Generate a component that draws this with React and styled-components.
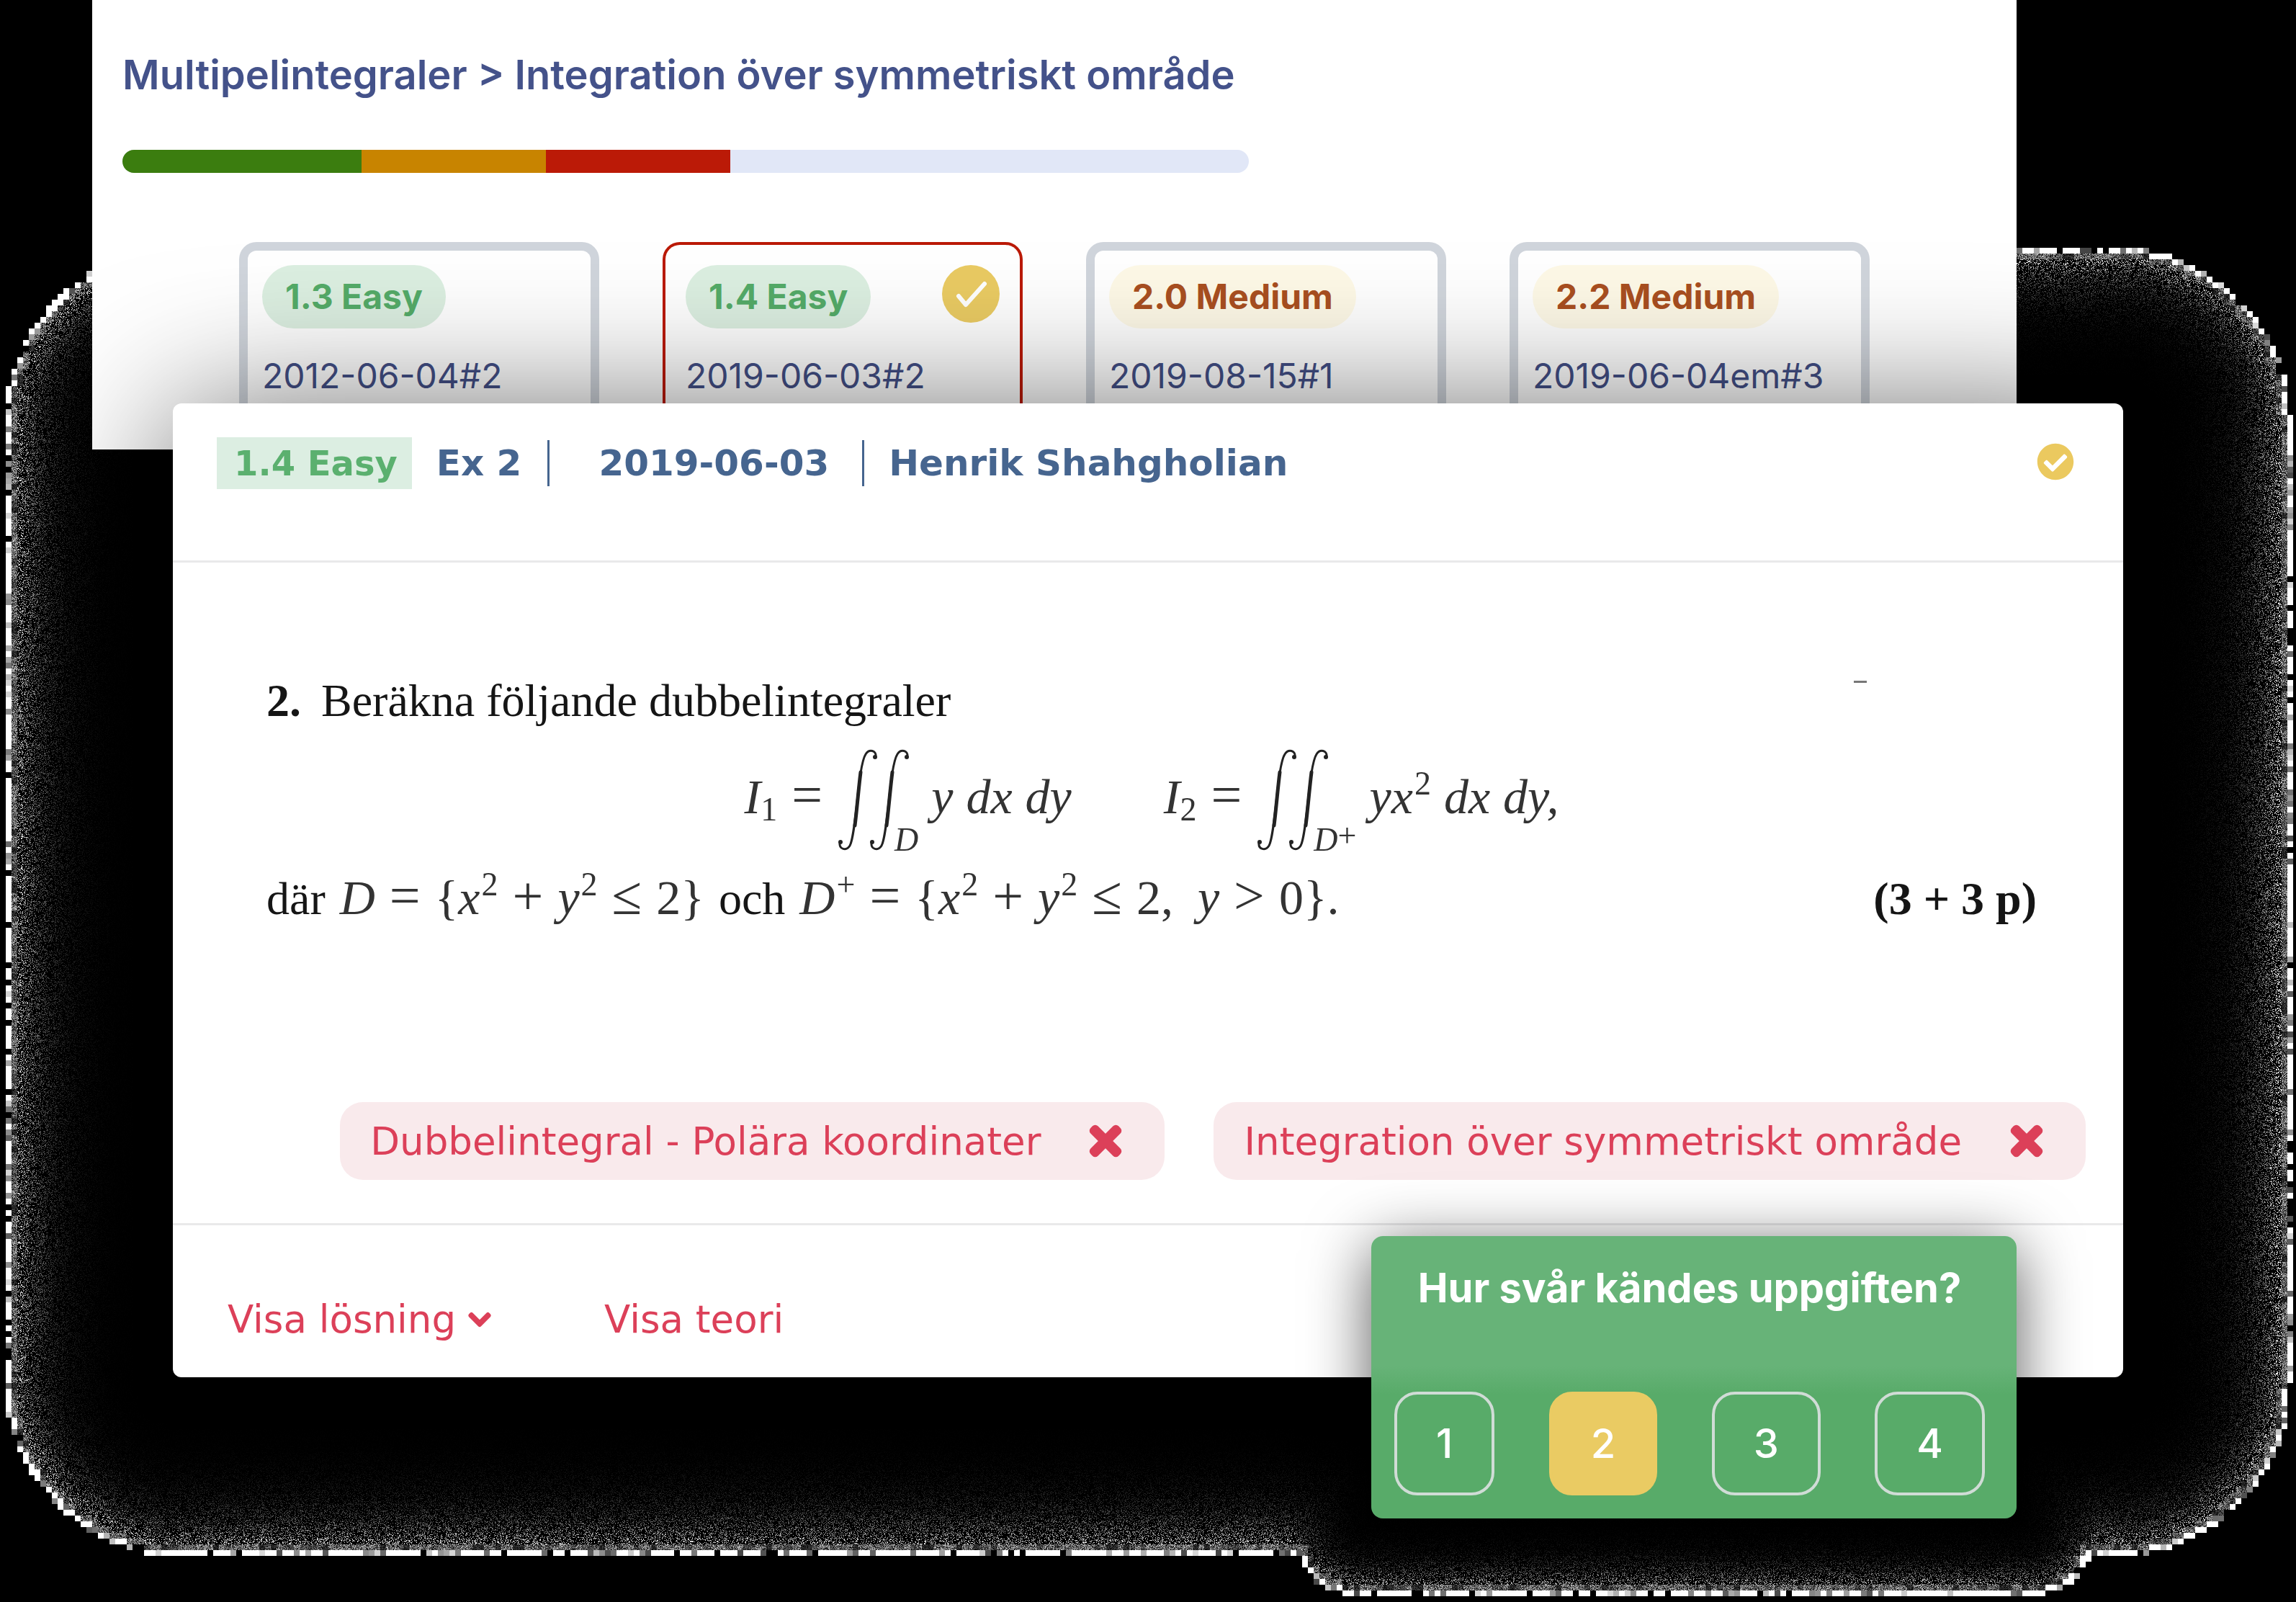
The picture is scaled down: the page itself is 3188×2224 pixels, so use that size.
import React, { useEffect, useRef } from "react";
import styled, { createGlobalStyle } from "styled-components";
import { FaCheckCircle, FaChevronDown, FaTimes } from "react-icons/fa";

const GlobalStyle = createGlobalStyle`
  *, *::before, *::after { box-sizing: border-box; }
  body { margin: 0; background: #000; }
  button { font: inherit; color: inherit; background: none; border: 0; padding: 0; cursor: pointer; }
`;

const Page = styled.main`
  position: relative;
  isolation: isolate;
  min-height: 100vh;
  padding-bottom: 312px;
  overflow: hidden;
  background: #000;
  font-family: Inter, "Liberation Sans", sans-serif;
`;

const GrainCanvas = styled.canvas`
  position: absolute;
  inset: 0;
  z-index: -1;
  width: 100%;
  height: 100%;
`;

/* ---------- course overview ---------- */

const Overview = styled.section`
  margin: 0 388px 0 128px;
  padding: 68px 42px 0;
  background: #fff;
  overflow: hidden;
`;

const Title = styled.h1`
  margin: 0;
  font-size: 56px;
  line-height: 72px;
  font-weight: 600;
  color: #44528a;
`;

const ProgressBar = styled.div`
  display: flex;
  max-width: 1564px;
  height: 32px;
  margin-top: 68px;
  border-radius: 16px;
  overflow: hidden;
  background: #e1e7f7;
`;

const Segment = styled.span`
  flex: 0 0 ${(p) => p.$share}%;
  background: ${(p) => p.$color};
`;

const CardRow = styled.div`
  display: flex;
  gap: 88px;
  margin-top: 96px;
  padding-left: 162px;
`;

const ExamCard = styled.article`
  flex: 0 1 500px;
  height: 288px;
  padding: ${(p) => (p.$selected ? "28px" : "20px")};
  border: solid ${(p) => (p.$selected ? "#bb1a07" : "#d0d5dc")};
  border-width: ${(p) => (p.$selected ? "4px" : "12px")};
  border-bottom: 0;
  border-radius: 24px 24px 0 0;
  white-space: nowrap;
`;

const CardTop = styled.div`
  display: flex;
  align-items: flex-start;
  justify-content: space-between;
`;

const Pill = styled.span`
  padding: 0 32px;
  border-radius: 44px;
  font-size: 48px;
  line-height: 88px;
  font-weight: 700;
  color: ${(p) => (p.$level === "easy" ? "#54ab68" : "#a94f20")};
  background: ${(p) => (p.$level === "easy" ? "#dcefe1" : "#fef9e7")};
`;

const DoneMark = styled.svg`
  width: 80px;
  height: 80px;
`;

const ExamDate = styled.p`
  margin: 36px 0 0;
  font-size: 48px;
  line-height: 60px;
  color: #434f86;
`;

/* ---------- exercise dialog ---------- */

const Dialog = styled.section`
  position: relative;
  margin: -64px 240px 0;
  border-radius: 12px;
  background: #fff;
  box-shadow: 0 16px 200px rgba(0, 0, 0, 0.62);
`;

const Header = styled.header`
  display: flex;
  align-items: flex-start;
  height: 221px;
  padding: 47px 68px 0 61px;
  border-bottom: 3px solid #e9e9ea;
  font-family: "DejaVu Sans", sans-serif;
  font-size: 50px;
  line-height: 72px;
  font-weight: 700;
  color: #46658f;
  white-space: nowrap;
`;

const Badge = styled.span`
  padding: 0 20px 0 24px;
  font-size: 48px;
  color: #5bb06f;
  background: #dceee2;
`;

const HeaderItem = styled.span`
  margin-left: ${(p) => p.$gap}px;
`;

const Divider = styled.span`
  width: 3px;
  height: 64px;
  margin: 4px 0 0 ${(p) => p.$gap}px;
  background: #46658f;
`;

const HeaderStatus = styled.span`
  display: flex;
  align-items: center;
  height: 68px;
  margin-left: auto;
  color: #ebc95f;
`;

const Body = styled.div`
  padding: 156px 52px 60px;
`;

const Problem = styled.div`
  padding: 0 68px 0 78px;
  font-family: "Liberation Serif", serif;
  font-size: 64px;
  line-height: 72px;
  color: #151515;
  white-space: nowrap;
`;

const Line = styled.div`
  display: flex;
  align-items: baseline;
`;

const ItemNumber = styled.b`
  margin-right: 28px;
`;

const Blemish = styled.span`
  align-self: flex-start;
  width: 18px;
  height: 3px;
  margin: 8px 236px 0 auto;
  background: #777;
`;

const Formula = styled.div`
  display: flex;
  justify-content: center;
  gap: 128px;
  height: 144px;
  margin: 29px 0 28px;
  font-size: 68px;
`;

const Equation = styled.div`
  display: flex;
  align-items: center;
  color: #333;
`;

const MathText = styled.span`
  font-style: italic;
  margin-left: ${(p) => p.$gap || 0}px;
  padding-bottom: 8px;
`;

const InlineMath = styled.span`
  margin: 0 20px;
  font-size: 68px;
  color: #333;
`;

const Relation = styled.span`
  margin: 0 20px;
  font-size: 76px;
  line-height: 0;
  font-style: normal;
`;

const Sup = styled.sup`
  margin-left: 2px;
  font-size: 46px;
  line-height: 0;
  font-style: normal;
  vertical-align: 26px;
`;

const Sub = styled.sub`
  font-size: 46px;
  line-height: 0;
  font-style: normal;
  vertical-align: -10px;
`;

const Limit = styled.span`
  align-self: flex-end;
  margin-left: -24px;
  font-size: 46px;
  line-height: 32px;
  font-style: italic;
`;

const LimitSign = styled.span`
  font-size: 46px;
  line-height: 0;
  font-style: normal;
  vertical-align: 6px;
`;

const Points = styled.b`
  margin-left: auto;
`;

const Tags = styled.div`
  display: flex;
  justify-content: flex-end;
  gap: 68px;
  margin-top: 246px;
`;

const Tag = styled.span`
  display: flex;
  align-items: center;
  gap: 60px;
  height: 108px;
  padding: 0 52px 0 42px;
  border-radius: 32px;
  background: #f9eaec;
  font-family: "DejaVu Sans", sans-serif;
  font-size: 53px;
  color: #dc4059;
  white-space: nowrap;
`;

const TagRemove = styled.button`
  display: flex;
  stroke: currentColor;
`;

const Footer = styled.footer`
  display: flex;
  gap: 156px;
  padding: 99px 76px 48px;
  border-top: 3px solid #e9e9ea;
`;

const FooterButton = styled.button`
  display: flex;
  align-items: center;
  gap: 16px;
  font-family: "DejaVu Sans", sans-serif;
  font-size: 53px;
  line-height: 64px;
  color: #dc4059;
`;

/* ---------- difficulty popup ---------- */

const Popup = styled.aside`
  position: absolute;
  right: 148px;
  bottom: -196px;
  width: 896px;
  padding: 36px 44px 32px 32px;
  border-radius: 16px;
  background: linear-gradient(#67b378 0 46%, #58ab69 56%);
  box-shadow: 0 16px 88px rgba(0, 0, 0, 0.65);
  color: #fff;
`;

const Question = styled.h2`
  margin: 0 0 108px;
  font-size: 56px;
  line-height: 72px;
  font-weight: 700;
  text-align: center;
  white-space: nowrap;
`;

const Choices = styled.div`
  display: flex;
  justify-content: space-between;
`;

const Choice = styled.button`
  && {
    height: 144px;
    padding: 0 54px;
    border: 4px solid ${(p) => (p.$active ? "#eacb63" : "#d0dcd6")};
    border-radius: 32px;
    background: ${(p) => (p.$active ? "#eacb63" : "transparent")};
    font-size: 56px;
    font-weight: 500;
  }
`;

const exams = [
  { grade: "1.3 Easy", level: "easy", date: "2012-06-04#2" },
  { grade: "1.4 Easy", level: "easy", date: "2019-06-03#2", selected: true },
  { grade: "2.0 Medium", level: "medium", date: "2019-08-15#1" },
  { grade: "2.2 Medium", level: "medium", date: "2019-06-04em#3" },
];

const progress = [
  { share: 21.25, color: "#3b7d0f" },
  { share: 16.35, color: "#c88400" },
  { share: 16.35, color: "#bb1a07" },
];

const tags = ["Dubbelintegral - Polära koordinater", "Integration över symmetriskt område"];

/* Depth inside a rounded halo of the given reach round a box; negative outside. */
function depth(x, y, box, reach, power) {
  const dx = Math.max(box.left - x, 0, x - box.right);
  const dy = Math.max(box.top - y, 0, y - box.bottom);
  return reach - Math.pow(dx ** power + dy ** power, 1 / power);
}

/* Grain round the dialog and the popup: 8px blocks at the rim, fine specks fading inwards. */
function paintGrain(canvas, dialog, popup) {
  const host = canvas.getBoundingClientRect();
  const w = (canvas.width = Math.round(host.width));
  const h = (canvas.height = Math.round(host.height));
  const toBox = (el) => {
    const r = el.getBoundingClientRect();
    return { left: r.left - host.left, right: r.right - host.left, top: r.top - host.top, bottom: r.bottom - host.top };
  };
  const big = toBox(dialog);
  big.top += 16;
  big.bottom += 16;
  const small = toBox(popup);
  const ctx = canvas.getContext("2d");
  const image = ctx.createImageData(w, h);
  const data = new Uint32Array(image.data.buffer);
  data.fill(0xff000000);
  let seed = 7;
  const rand = () => {
    seed = (seed + 0x6d2b79f5) | 0;
    let t = Math.imul(seed ^ (seed >>> 15), 1 | seed);
    t = (t + Math.imul(t ^ (t >>> 7), 61 | t)) ^ t;
    return ((t ^ (t >>> 14)) >>> 0) / 4294967296;
  };
  for (let by = 0; by < h; by += 8) {
    for (let bx = 0; bx < w; bx += 8) {
      const e1 = depth(bx + 4, by + 4, big, 232, 1.9);
      const e2 = depth(bx + 4, by + 4, small, 108, 2.6);
      const e = Math.max(e1, e2);
      if (e < 0 || e1 > 200) continue;
      const pick = rand();
      const tone = pick < 0.62 ? 255 : pick < 0.88 ? 70 + rand() * 150 : 0;
      const a1 = e1 > 0 ? Math.exp((e1 - 14) / 34) : 0;
      const a2 = e2 > 0 ? Math.exp((e2 - 12) / 22) : 0;
      const alpha = Math.max(1, a1 + a2);
      for (let y = by; y < Math.min(by + 8, h); y++) {
        for (let x = bx; x < Math.min(bx + 8, w); x++) {
          let v;
          if (e < 8) v = tone;
          else if (e < 16) v = (0.3 + tone / 500) * 255 * rand();
          else v = rand() < 0.25 ? 255 / alpha : 0;
          const g = v & 255;
          data[y * w + x] = 0xff000000 | (g << 16) | (g << 8) | g;
        }
      }
    }
  }
  ctx.putImageData(image, 0, 0);
}

function Integral({ limit }) {
  const curve = "M4 132 C3 141 13 144 18 136 C27 120 29 26 40 9 C45 1 55 4 54 12";
  return (
    <>
      <svg width="104" height="144" viewBox="0 0 104 144" fill="none" stroke="#222" strokeLinecap="round" role="img" aria-label="dubbelintegral">
        {[0, 44].map((x) => (
          <g key={x} transform={`translate(${x} 0)`}>
            <path d={curve} strokeWidth="3" />
            <path d="M25 108 C28 84 30 58 33 34" strokeWidth="5" />
            <circle cx="5" cy="131" r="3" fill="#222" stroke="none" />
            <circle cx="53" cy="13" r="3" fill="#222" stroke="none" />
          </g>
        ))}
      </svg>
      <Limit>{limit}</Limit>
    </>
  );
}

export default function App() {
  const canvasRef = useRef(null);
  const dialogRef = useRef(null);
  const popupRef = useRef(null);

  useEffect(() => {
    const paint = () => paintGrain(canvasRef.current, dialogRef.current, popupRef.current);
    paint();
    window.addEventListener("resize", paint);
    return () => window.removeEventListener("resize", paint);
  }, []);

  return (
    <Page>
      <GlobalStyle />
      <GrainCanvas ref={canvasRef} aria-hidden="true" />

      <Overview>
        <Title>Multipelintegraler &gt; Integration över symmetriskt område</Title>
        <ProgressBar>
          {progress.map((s) => (
            <Segment key={s.color} $share={s.share} $color={s.color} />
          ))}
        </ProgressBar>
        <CardRow>
          {exams.map((exam) => (
            <ExamCard key={exam.date} $selected={exam.selected}>
              <CardTop>
                <Pill $level={exam.level}>{exam.grade}</Pill>
                {exam.selected && (
                  <DoneMark viewBox="0 0 80 80" aria-hidden="true">
                    <circle cx="40" cy="40" r="40" fill="#eacb63" />
                    <path d="M23 43 L33 55 L59 26" fill="none" stroke="#fff" strokeWidth="6" strokeLinecap="round" strokeLinejoin="round" />
                  </DoneMark>
                )}
              </CardTop>
              <ExamDate>{exam.date}</ExamDate>
            </ExamCard>
          ))}
        </CardRow>
      </Overview>

      <Dialog ref={dialogRef}>
        <Header>
          <Badge>1.4 Easy</Badge>
          <HeaderItem $gap={34}>Ex 2</HeaderItem>
          <Divider $gap={36} />
          <HeaderItem $gap={68}>2019-06-03</HeaderItem>
          <Divider $gap={46} />
          <HeaderItem $gap={34}>Henrik Shahgholian</HeaderItem>
          <HeaderStatus>
            <FaCheckCircle size={52} />
          </HeaderStatus>
        </Header>

        <Body>
          <Problem>
            <Line>
              <ItemNumber>2.</ItemNumber>
              <span>Beräkna följande dubbelintegraler</span>
              <Blemish />
            </Line>
            <Formula>
              <Equation>
                <MathText>
                  I<Sub>1</Sub>
                  <Relation>=</Relation>
                </MathText>
                <Integral limit="D" />
                <MathText $gap={18}>y</MathText>
                <MathText $gap={18}>dx</MathText>
                <MathText $gap={18}>dy</MathText>
              </Equation>
              <Equation>
                <MathText>
                  I<Sub>2</Sub>
                  <Relation>=</Relation>
                </MathText>
                <Integral
                  limit={
                    <>
                      D<LimitSign>+</LimitSign>
                    </>
                  }
                />
                <MathText $gap={18}>
                  yx<Sup>2</Sup>
                </MathText>
                <MathText $gap={18}>dx</MathText>
                <MathText $gap={18}>dy,</MathText>
              </Equation>
            </Formula>
            <Line>
              <span>där</span>
              <InlineMath>
                <i>D</i>
                <Relation>=</Relation>
                {"{"}
                <i>x</i>
                <Sup>2</Sup>
                <Relation>+</Relation>
                <i>y</i>
                <Sup>2</Sup>
                <Relation>≤</Relation>
                {"2}"}
              </InlineMath>
              <span>och</span>
              <InlineMath>
                <i>D</i>
                <Sup>+</Sup>
                <Relation>=</Relation>
                {"{"}
                <i>x</i>
                <Sup>2</Sup>
                <Relation>+</Relation>
                <i>y</i>
                <Sup>2</Sup>
                <Relation>≤</Relation>
                {"2,\u2002"}
                <i>y</i>
                <Relation>&gt;</Relation>
                {"0}."}
              </InlineMath>
              <Points>(3 + 3 p)</Points>
            </Line>
          </Problem>

          <Tags>
            {tags.map((tag) => (
              <Tag key={tag}>
                {tag}
                <TagRemove type="button" aria-label={`Ta bort ${tag}`}>
                  <FaTimes size={60} strokeWidth={28} />
                </TagRemove>
              </Tag>
            ))}
          </Tags>
        </Body>

        <Footer>
          <FooterButton type="button">
            Visa lösning <FaChevronDown size={34} stroke="currentColor" strokeWidth={36} />
          </FooterButton>
          <FooterButton type="button">Visa teori</FooterButton>
        </Footer>

        <Popup ref={popupRef}>
          <Question>Hur svår kändes uppgiften?</Question>
          <Choices>
            {[1, 2, 3, 4].map((n) => (
              <Choice key={n} type="button" $active={n === 2} aria-pressed={n === 2}>
                {n}
              </Choice>
            ))}
          </Choices>
        </Popup>
      </Dialog>
    </Page>
  );
}
